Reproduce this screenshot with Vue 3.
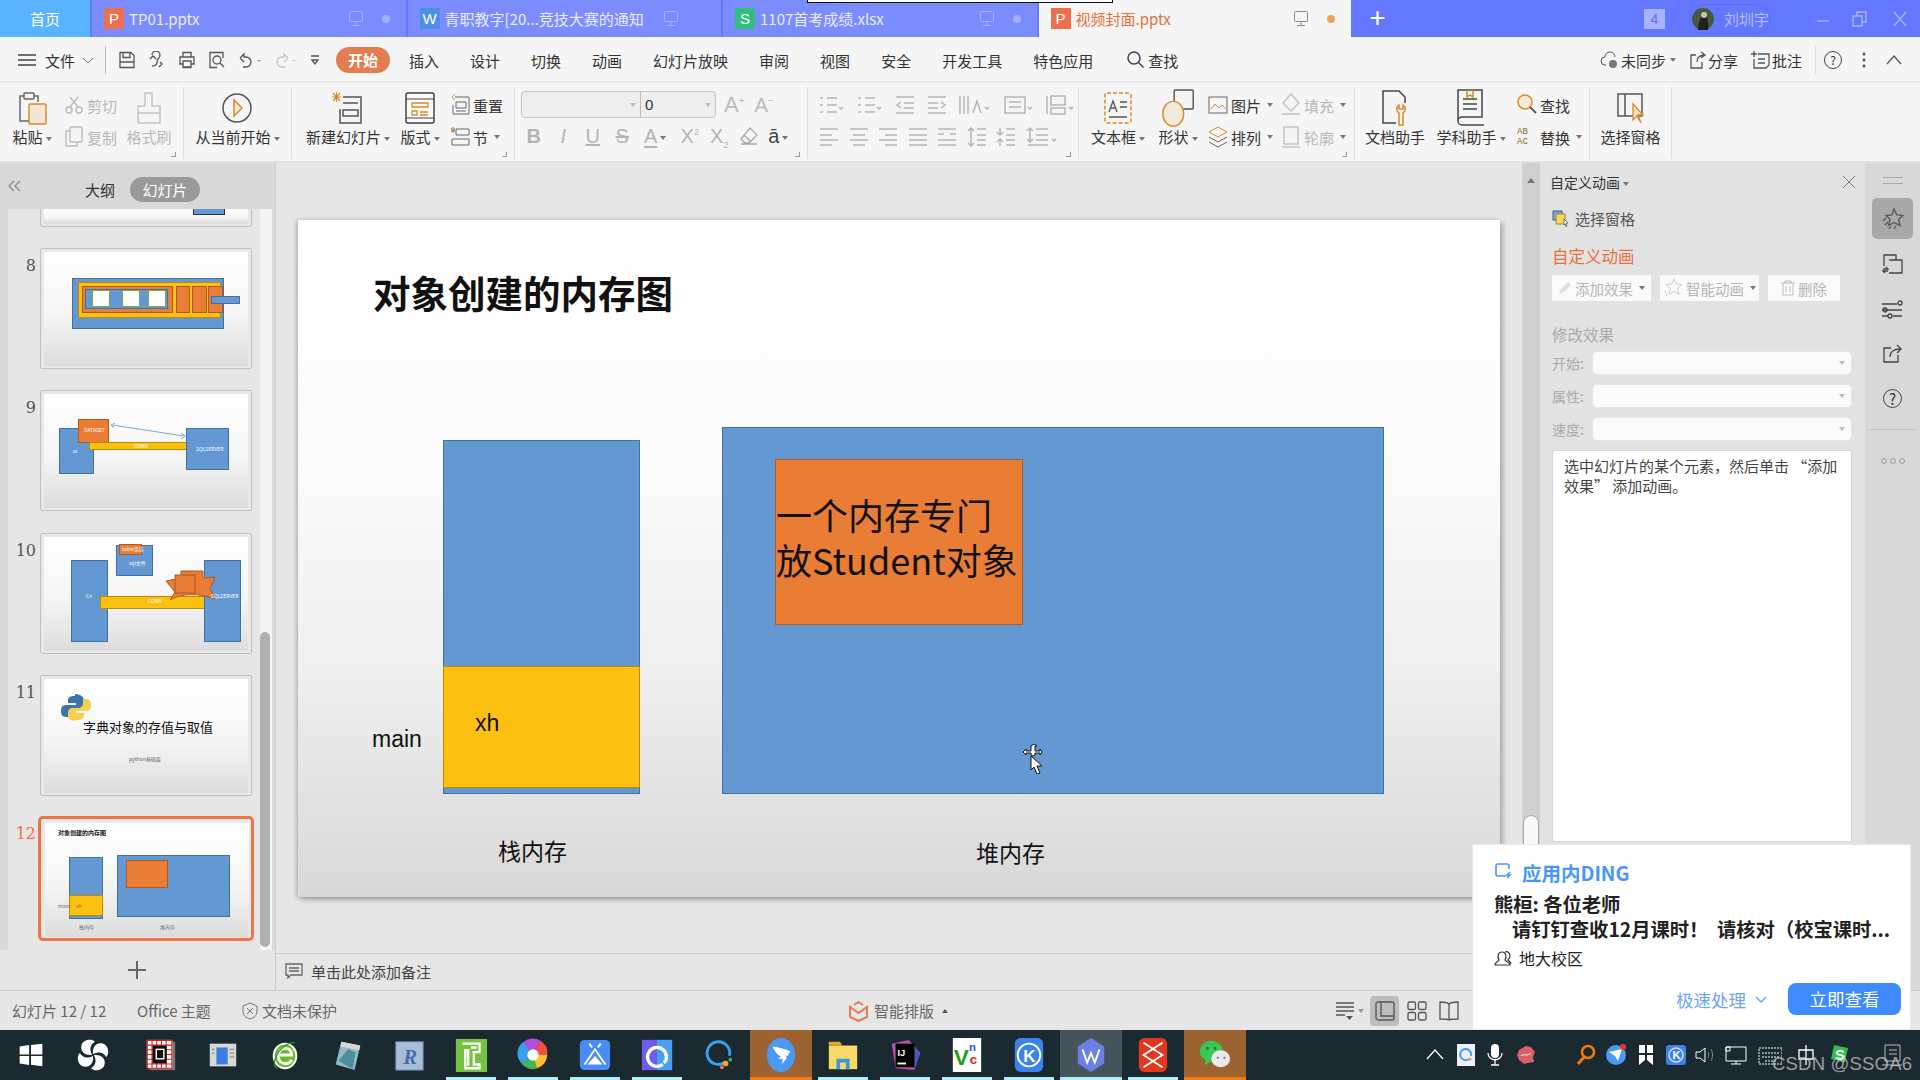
<template>
  <div class="app">
    <div class="tooltip-edge"></div>

    <!-- title tabs -->
    <div class="tabbar">
      <div class="home-tab">首页</div>
      <div v-for="t in tabs" :key="t.name" class="tab" :class="{ active: t.active }">
        <span class="tab-badge" :style="{ background: t.color }">{{ t.mark }}</span>
        <span class="tab-name">{{ t.name }}</span>
        <svg class="tab-monitor" width="16" height="17" viewBox="0 0 16 17" fill="none" stroke="currentColor">
          <rect x="1.5" y="1.5" width="13" height="10" rx="1" />
          <path d="M8 12v3M4 15.5h8" />
        </svg>
        <span v-if="t.dot" class="tab-dot"></span>
      </div>
      <div class="tab-plus">+</div>
      <div class="win-tools">
        <span class="count-badge">4</span>
        <span class="user-chip">
          <svg width="22" height="22" viewBox="0 0 22 22"><circle cx="11" cy="11" r="11" fill="#49573f" /><path d="M6 22c0-7 3-14 6-17 3 3 5 9 4 17z" fill="#1d2419" /><circle cx="12" cy="7" r="3" fill="#c4c6a8" /></svg>
          刘圳宇
        </span>
        <svg class="win-btns" width="100" height="20" viewBox="0 0 100 20" fill="none" stroke="#a8b4ff" stroke-width="1.4">
          <path d="M5 12h12" />
          <path d="M41 7h9v10h-9zM45 7V3h9v10h-4" />
          <path d="M82 3l12 14M94 3L82 17" />
        </svg>
      </div>
    </div>

    <!-- menu row -->
    <div class="menubar">
      <svg class="burger" width="18" height="12" viewBox="0 0 18 12" stroke="#444" stroke-width="1.3"><path d="M0 1h18M0 6h18M0 11h18" /></svg>
      <span class="file-menu">文件</span>
      <svg class="file-chevron" width="12" height="7" viewBox="0 0 12 7" fill="none" stroke="#777"><path d="M1 1l5 5 5-5" /></svg>
      <span class="menu-sep"></span>
      <div class="quick-tools">
        <svg width="18" height="18" viewBox="0 0 18 18"><path d="M2 1.5h11l3 3v12H2zM5 1.5v5h7v-5M2 11h14" /></svg>
        <svg width="18" height="18" viewBox="0 0 18 18"><path d="M4 4a4 4 0 0 1 8 0c0 4-3 3-3 7s-3 4-5 4M2 8l3-3 3 3M12 11l2 2-3 3" /></svg>
        <svg width="18" height="18" viewBox="0 0 18 18"><path d="M5 6V1.500h8V6M2 6h14v7h-3v3.500H5V13H2zM5 10h8v6H5z" /></svg>
        <svg width="18" height="18" viewBox="0 0 18 18"><path d="M15 7V1.500H2v15h7" /><circle cx="9" cy="9" r="4" /><path d="M12 12l4 4" /></svg>
        <svg width="24" height="18" viewBox="0 0 24 18"><path d="M2 7l4-4v3h2a5 5 0 0 1 0 10H5M6 11L2 7" /><path d="M19 9l2 2 2-2" fill="#999" stroke="none" /></svg>
        <svg class="dim" width="24" height="18" viewBox="0 0 24 18"><path d="M14 7l-4-4v3H8a5 5 0 0 0 0 10h3M10 11l4-4" /><path d="M18 9l2 2 2-2" fill="#ccc" stroke="none" /></svg>
        <svg width="10" height="12" viewBox="0 0 10 12"><path d="M1 2h8M2 6l3 4 3-4z" /></svg>
      </div>
      <span class="pill">开始</span>
      <nav class="menu-items">
        <span v-for="m in menus" :key="m">{{ m }}</span>
      </nav>
      <span class="menu-find">
        <svg width="20" height="20" viewBox="0 0 20 20" fill="none" stroke="#444" stroke-width="1.5"><circle cx="8" cy="8" r="6" /><path d="M12.500 12.500l5 5" /></svg>
        查找
      </span>
      <div class="menu-right">
        <span class="mr-item">
          <svg width="20" height="18" viewBox="0 0 20 18" fill="none" stroke="#555"><path d="M6 14H5a4 4 0 0 1 0-8 5 5 0 0 1 10 0" /><circle cx="13" cy="13" r="4" fill="#777" stroke="none" /></svg>
          未同步<i class="caret"></i>
        </span>
        <span class="mr-item">
          <svg width="18" height="18" viewBox="0 0 18 18" fill="none" stroke="#555" stroke-width="1.300"><path d="M7 4H2v13h11v-6M8 11c0-5 3-7 8-7M12 1l4 3-4 3" /></svg>
          分享
        </span>
        <span class="mr-item">
          <svg width="20" height="18" viewBox="0 0 20 18" fill="none" stroke="#555" stroke-width="1.300"><path d="M7 3h11v11l-3 3H3V8M7 8h7M7 12h7M0 3h6M3 0v6" /></svg>
          批注
        </span>
        <span class="mr-sep"></span>
        <span class="help-circle">?</span>
        <svg width="4" height="16" viewBox="0 0 4 16" fill="#555"><circle cx="2" cy="2" r="1.500" /><circle cx="2" cy="8" r="1.500" /><circle cx="2" cy="14" r="1.500" /></svg>
        <svg width="16" height="10" viewBox="0 0 16 10" fill="none" stroke="#555" stroke-width="1.300"><path d="M1 9l7-8 7 8" /></svg>
      </div>
    </div>

    <!-- ribbon -->
    <div class="ribbon">
      <div class="rgroup" style="width: 184px">
        <div class="big" style="width: 36px; margin-left: 14px">
          <svg width="32" height="36" viewBox="0 0 32 36" fill="none" stroke="#666" stroke-width="1.500"><path d="M8 6H4v25h10M22 12V6h-4" /><rect x="8" y="3" width="10" height="6" rx="1" /><rect x="13" y="14" width="17" height="20" rx="1" fill="#f1e6d8" stroke="#d98a2b" /></svg>
          <span class="lbl">粘贴<i class="caret"></i></span>
        </div>
        <div class="stack off" style="width: 62px; margin-left: 14px">
          <span class="row">
            <svg width="20" height="20" viewBox="0 0 20 20" fill="none" stroke="#bbb" stroke-width="1.400"><circle cx="5" cy="15" r="3" /><circle cx="15" cy="15" r="3" /><path d="M6 12L14 2M14 12L6 2" /></svg>
            剪切
          </span>
          <span class="row">
            <svg width="20" height="22" viewBox="0 0 20 22" fill="none" stroke="#bbb" stroke-width="1.400"><rect x="6" y="1" width="12" height="15" rx="1" /><path d="M6 5H2v15h11v-4" /></svg>
            复制
          </span>
        </div>
        <div class="big off" style="width: 46px">
          <svg width="32" height="36" viewBox="0 0 32 36" fill="none" stroke="#c2c2c2" stroke-width="1.500"><path d="M12 16V3h7v13h8v7H5v-7zM5 23h22v10H5z" /></svg>
          <span class="lbl">格式刷</span>
        </div>
        <i class="corner"></i>
      </div>

      <div class="rgroup" style="width: 108px; justify-content: center">
        <div class="big">
          <svg width="32" height="36" viewBox="0 0 32 36" fill="none"><circle cx="16" cy="18" r="14" stroke="#555" stroke-width="1.500" /><path d="M13 10l8 8-8 8z" stroke="#d98a2b" stroke-width="1.500" fill="#f7ebd8" /></svg>
          <span class="lbl">从当前开始<i class="caret"></i></span>
        </div>
      </div>

      <div class="rgroup" style="width: 223px; padding-left: 12px">
        <div class="big" style="width: 88px">
          <svg width="34" height="36" viewBox="0 0 34 36" fill="none" stroke="#555" stroke-width="1.500"><path d="M12 7h18v26H9V19" /><rect x="12" y="20" width="15" height="6" /><path d="M12 13h15" /><path d="M1 7h9M5.500 2v10M2 3l7 8M9 3l-7 8" stroke="#d98a2b" stroke-width="1.200" /></svg>
          <span class="lbl">新建幻灯片<i class="caret"></i></span>
        </div>
        <div class="big" style="width: 44px; margin-left: 6px">
          <svg width="30" height="36" viewBox="0 0 30 36"><rect x="1" y="3" width="28" height="30" rx="2" fill="#fafafa" stroke="#444" stroke-width="1.500" /><path d="M1 9h28M1 28h28" stroke="#444" /><path d="M7 13h16v4H7zM7 21h5v4H7zM15 22h8M15 25h8" fill="none" stroke="#d98a2b" stroke-width="1.300" /></svg>
          <span class="lbl">版式<i class="caret"></i></span>
        </div>
        <div class="stack" style="margin-left: 8px">
          <span class="row">
            <svg width="20" height="24" viewBox="0 0 20 24" fill="none" stroke="#666"><path d="M5 4h14v17H3v-9M6 9h10v6H6zM6 18h10" /><path d="M5 1L2 4l3 3" stroke="#d98a2b" /></svg>
            重置
          </span>
          <span class="row">
            <svg width="20" height="24" viewBox="0 0 20 24" fill="none" stroke="#666"><path d="M6 4h13v6H6zM2 14h17v6H2zM1 5h4M3 2v6" /><path d="M1 3l4 4M5 3L1 7" stroke="#d98a2b" /></svg>
            节<i class="caret"></i>
          </span>
        </div>
        <i class="corner"></i>
      </div>

      <div class="rgroup font-group" style="width: 293px">
        <div class="font-top">
          <div class="font-box">
            <span class="fb-name"><i class="caret"></i></span>
            <span class="fb-size">0<i class="caret"></i></span>
          </div>
          <span class="grow-a">A<sup>+</sup></span>
          <span class="grow-a small-a">A<sup>−</sup></span>
        </div>
        <div class="font-bottom">
          <b>B</b><em>I</em><u>U</u><s>S</s>
          <span class="under-a"><span>A</span><i class="caret"></i></span>
          <span class="xsup">X<sup>2</sup></span>
          <span class="xsup">X<sub>2</sub></span>
          <span class="eraser"><svg width="20" height="20" viewBox="0 0 20 20" fill="none" stroke="#aaa" stroke-width="1.400"><path d="M11 2l7 7-8 8H6l-4-4zM5 9l7 7M2 18h16" /></svg></span>
          <span class="dark-a">ā<i class="caret"></i></span>
        </div>
        <i class="corner"></i>
      </div>

      <div class="rgroup para-group" style="width: 271px">
        <div class="para-row top">
          <svg v-for="(d, i) in paraTop" :key="i" :width="d.w" height="24" :viewBox="`0 0 ${d.w} 24`" fill="none" stroke="#b5b5b5" stroke-width="1.500"><path :d="d.d" /></svg>
        </div>
        <div class="para-row">
          <svg v-for="(d, i) in paraBottom" :key="i" :width="d.w" height="24" :viewBox="`0 0 ${d.w} 24`" fill="none" stroke="#b5b5b5" stroke-width="1.500"><path :d="d.d" /></svg>
        </div>
        <i class="corner"></i>
      </div>

      <div class="rgroup" style="width: 276px; padding-left: 11px">
        <div class="big" style="width: 56px">
          <svg width="32" height="36" viewBox="0 0 32 36" fill="none"><rect x="3" y="3" width="26" height="30" rx="2" stroke="#d98a2b" stroke-width="1.500" stroke-dasharray="4 2" /><path d="M7 22l4-11 4 11M8.500 18h5M18 12h7M18 17h7M7 27h18" stroke="#555" stroke-width="1.300" /></svg>
          <span class="lbl">文本框<i class="caret"></i></span>
        </div>
        <div class="big" style="width: 42px; margin-left: 11px">
          <svg width="34" height="40" viewBox="0 0 34 40" fill="none"><rect x="13" y="1" width="20" height="20" rx="1" stroke="#555" stroke-width="1.500" /><ellipse cx="12" cy="26" rx="11" ry="13" fill="#f3e9db" stroke="#d98a2b" stroke-width="1.500" /></svg>
          <span class="lbl">形状<i class="caret"></i></span>
        </div>
        <div class="stack" style="width: 66px; margin-left: 9px">
          <span class="row">
            <svg width="20" height="20" viewBox="0 0 20 20" fill="none"><rect x="1" y="2" width="18" height="16" stroke="#666" /><path d="M3 14l4-5 4 4 3-3 4 4" stroke="#d98a2b" /></svg>
            图片<i class="caret"></i>
          </span>
          <span class="row">
            <svg width="20" height="22" viewBox="0 0 20 22" fill="none" stroke="#666"><path d="M10 1l9 5-9 5-9-5z" stroke="#d98a2b" /><path d="M1 11l9 5 9-5M1 16l9 5 9-5" /></svg>
            排列<i class="caret"></i>
          </span>
        </div>
        <div class="stack off" style="width: 66px; margin-left: 7px">
          <span class="row">
            <svg width="20" height="24" viewBox="0 0 20 24" fill="none" stroke="#c0c0c0" stroke-width="1.400"><path d="M10 1l8 9-8 8-8-8zM1 21h18" /></svg>
            填充<i class="caret"></i>
          </span>
          <span class="row">
            <svg width="20" height="24" viewBox="0 0 20 24" fill="none" stroke="#c0c0c0" stroke-width="1.400"><rect x="3" y="2" width="14" height="17" /><path d="M1 22h18" /></svg>
            轮廓<i class="caret"></i>
          </span>
        </div>
        <i class="corner"></i>
      </div>

      <div class="rgroup" style="width: 235px; padding-left: 10px">
        <div class="big" style="width: 60px">
          <svg width="28" height="38" viewBox="0 0 28 38" fill="none"><path d="M15 34H2V2h16l6 6v6" stroke="#444" stroke-width="1.500" /><path d="M18 16c-3 2-3 6 0 8v12h4V24c3-2 3-6 0-8v4h-4z" stroke="#d98a2b" stroke-width="1.500" /></svg>
          <span class="lbl">文档助手</span>
        </div>
        <div class="big" style="width: 70px; margin-left: 11px">
          <svg width="30" height="38" viewBox="0 0 30 38" fill="none" stroke="#444" stroke-width="1.500"><path d="M2 32V1h24v27H6a4 4 0 0 0 0 8h22M7 10h14M7 15h14M7 20h14" /><path d="M11 1v7l3-2 3 2V1" stroke="#d98a2b" /></svg>
          <span class="lbl">学科助手<i class="caret"></i></span>
        </div>
        <div class="stack" style="margin-left: 11px">
          <span class="row">
            <svg width="20" height="22" viewBox="0 0 20 22" fill="none"><circle cx="8" cy="8" r="7" stroke="#d98a2b" stroke-width="1.500" fill="#f7ebd8" /><path d="M13 13l6 6" stroke="#555" stroke-width="1.800" /></svg>
            查找
          </span>
          <span class="row">
            <span class="abac">AB<br />AC</span>
            替换<i class="caret"></i>
          </span>
        </div>
      </div>

      <div class="rgroup" style="width: 82px; justify-content: center">
        <div class="big">
          <svg width="30" height="36" viewBox="0 0 30 36" fill="none"><path d="M3 4h24v22H3zM10 4v22" stroke="#555" stroke-width="1.500" /><path d="M18 14l10 11h-5l3 8-4-7-4 4z" fill="#f5e4c6" stroke="#d98a2b" stroke-width="1.300" /></svg>
          <span class="lbl">选择窗格</span>
        </div>
      </div>
    </div>

    <!-- workspace -->
    <div class="work">
      <aside class="slides-panel">
        <div class="sp-head">
          <svg class="sp-back" width="13" height="12" viewBox="0 0 13 12" fill="none" stroke="#888" stroke-width="1.300"><path d="M6 1L1 6l5 5M12 1L7 6l5 5" /></svg>
          <span class="sp-tab">大纲</span>
          <span class="sp-tab on">幻灯片</span>
        </div>
        <div class="sp-body">
          <div class="sp-list">
            <div class="thumb-clip">
              <div class="thumb-inner clip-inner">
                <span class="th-shape" style="left: 149px; top: -20px; width: 32px; height: 26px; background: #6498d2"></span>
              </div>
            </div>
            <div v-for="s in thumbs" :key="s.n" class="thumb-row" :class="{ current: s.n === 12 }">
              <span class="th-num">{{ s.n }}</span>
              <div class="thumb">
                <div class="thumb-inner">
                  <span
                    v-for="(b, i) in s.boxes"
                    :key="i"
                    class="th-shape"
                    :style="{ left: b[0] + 'px', top: b[1] + 'px', width: b[2] + 'px', height: b[3] + 'px', background: colors[b[4]].fill, borderColor: colors[b[4]].edge }"
                  ></span>
                  <svg v-if="s.n === 9" class="th-arrow" width="205" height="115" viewBox="0 0 205 115" fill="none" stroke="#7da9dc"><path d="M68 31l72 11M71 29l-4 2 3 3M137 39l4 3-4 3" /></svg>
                  <svg v-if="s.n === 10" class="th-arrow" width="205" height="115" viewBox="0 0 205 115"><path d="M122 44l15-3 0-7 22 0 0 7 12-1-5 12 5 10c-15-6-34-6-45 1l5-8z" fill="#e97d35" stroke="#ae5a21" /><rect x="131" y="38" width="20" height="18" fill="#e97d35" stroke="#ae5a21" /></svg>
                  <svg v-if="s.n === 11" class="th-arrow" width="205" height="115" viewBox="0 0 205 115"><path d="M31 17c-6 0-7 2-7 5v2h8v2H22c-4 0-5 3-5 6s1 6 5 6h3v-4c0-3 2-5 5-5h6c2 0 4-2 4-4v-4c0-3-4-6-9-6z" fill="#3d74a8" /><path d="M32 41c6 0 8-2 8-5v-2h-8v-2h10c4 0 5-3 5-6s-1-6-5-6h-3v4c0 3-2 5-5 5h-6c-2 0-4 2-4 4v4c0 3 3 6 8 4z" fill="#f4d04b" /></svg>
                  <span v-for="(t, i) in s.labels" :key="'l' + i" class="th-label" :class="t.cls" :style="{ left: t.x + 'px', top: t.y + 'px' }">{{ t.text }}</span>
                </div>
              </div>
            </div>
          </div>
          <div class="sp-scroll"><div class="sp-thumb"></div></div>
        </div>
        <div class="sp-add">
          <svg width="20" height="20" viewBox="0 0 20 20" stroke="#666" stroke-width="2"><path d="M10 1v18M1 10h18" /></svg>
        </div>
      </aside>

      <section class="center">
        <div class="canvas">
          <div class="slide">
            <h1 class="slide-title">对象创建的内存图</h1>
            <div class="shape blue" style="left: 145px; top: 220px; width: 197px; height: 354px"></div>
            <div class="shape yellow" style="left: 145px; top: 446px; width: 197px; height: 122px">xh</div>
            <div class="shape blue" style="left: 424px; top: 207px; width: 662px; height: 367px"></div>
            <div class="shape orange" style="left: 477px; top: 239px; width: 248px; height: 166px">一个内存专门放Student对象</div>
            <span class="slide-text" style="left: 74px; top: 504px">main</span>
            <span class="slide-text" style="left: 200px; top: 615px">栈内存</span>
            <span class="slide-text" style="left: 678px; top: 617px">堆内存</span>
            <svg class="cursor" width="24" height="30" viewBox="0 0 24 30">
              <path d="M9 2l3-2 3 2h-2v5h5V5l2 3-2 3V9h-5v2l-2 1-2-1V9H4v2L1 8l3-3v2h5zM9 12l11 10h-5l3 7-3 1-3-7-3 3z" fill="#fff" stroke="#111" stroke-width="1" />
            </svg>
          </div>
        </div>
        <div class="notes">
          <svg width="20" height="18" viewBox="0 0 20 18" fill="none" stroke="#666" stroke-width="1.300"><path d="M2 2h16v11H7l-3 3v-3H2zM5 6h10M5 9h10" /></svg>
          单击此处添加备注
        </div>
      </section>

      <div class="v-scroll">
        <i class="up-arrow"></i>
        <div class="v-thumb"></div>
      </div>

      <aside class="pane">
        <div class="pane-head">
          <span>自定义动画<i class="caret"></i></span>
          <svg width="12" height="12" viewBox="0 0 12 12" stroke="#777"><path d="M0 0l12 12M12 0L0 12" /></svg>
        </div>
        <div class="pane-link">
          <svg width="17" height="17" viewBox="0 0 17 17"><rect x="1" y="1" width="9" height="9" fill="#7fa4d8" stroke="#3e5f91" /><rect x="4" y="4" width="9" height="10" fill="#f3d65e" stroke="#a78a1e" /><path d="M12 9l4 4-2 .5 1 2.500-1 .5-1-2.500-1 1z" fill="#fff" stroke="#345" stroke-width=".7" /></svg>
          选择窗格
        </div>
        <h3 class="pane-orange">自定义动画</h3>
        <div class="pane-btns">
          <span class="pbtn" style="width: 99px">
            <svg width="14" height="14" viewBox="0 0 14 14"><path d="M1 13l2-5 7-7 3 3-7 7z" fill="#ddd" /></svg>
            添加效果<i class="caret"></i>
          </span>
          <span class="pbtn" style="width: 99px">
            <svg width="20" height="20" viewBox="0 0 20 20" fill="none" stroke="#ccc"><path d="M11 1l2 5 6 .5-4.500 4 1.500 6-5-3-5 3 1.500-6L3 6.500 9 6zM2 13l2 5" /></svg>
            智能动画<i class="caret"></i>
          </span>
          <span class="pbtn" style="width: 72px">
            <svg width="14" height="16" viewBox="0 0 14 16" fill="none" stroke="#bbb"><path d="M0 3h14M4 3V1h6v2M2 3v12h10V3M5 6v6M9 6v6" /></svg>
            删除
          </span>
        </div>
        <div class="pane-sub">修改效果</div>
        <div v-for="f in fields" :key="f" class="pane-field">
          <label>{{ f }}:</label>
          <div class="pane-select"><i class="caret light"></i></div>
        </div>
        <div class="pane-text">选中幻灯片的某个元素，然后单击 “添加效果” 添加动画。</div>
      </aside>

      <aside class="side">
        <div class="side-grip"></div>
        <div class="side-btn on">
          <svg width="22" height="22" viewBox="0 0 22 22" fill="none" stroke="#555" stroke-width="1.300"><path d="M12 1l3 6 6 .5-4.500 4 1.500 6-6-3-5.500 3 1.500-6L4 7.500 10 7zM1 13l3-3M3 17l3-3M7 21l2-3M12 21l2-3" /></svg>
        </div>
        <div class="side-btn">
          <svg width="21" height="20" viewBox="0 0 21 20" fill="none" stroke="#444" stroke-width="1.300"><path d="M2 12V1h12v5M7 6h13v13H7M1 15h5l-2-2M6 17H1l2 2" /></svg>
        </div>
        <div class="side-btn">
          <svg width="21" height="20" viewBox="0 0 21 20" fill="none" stroke="#444" stroke-width="1.300"><path d="M0 5h15M0 11h20M0 17h6M11 17h9" /><circle cx="18" cy="4" r="2" /><circle cx="8" cy="17" r="2" /><circle cx="3" cy="11" r="2" /></svg>
        </div>
        <div class="side-btn">
          <svg width="20" height="20" viewBox="0 0 20 20" fill="none" stroke="#444" stroke-width="1.300"><path d="M8 4H1v14h14v-7M7 13c0-5 4-8 10-8M14 1l4 4-4 4" /></svg>
        </div>
        <div class="side-btn">
          <span class="side-help">?</span>
        </div>
        <div class="side-line"></div>
        <div class="side-more">
          <i></i><i></i><i></i>
        </div>
      </aside>
    </div>

    <!-- status bar -->
    <div class="status">
      <span class="st-cell" style="width: 125px">幻灯片 12 / 12</span>
      <span class="st-cell" style="width: 105px">Office 主题</span>
      <span class="st-cell" style="width: 130px">
        <svg width="16" height="18" viewBox="0 0 16 18" fill="none" stroke="#777"><path d="M8 1l7 3v6c0 3-3 6-7 7-4-1-7-4-7-7V4zM5 6l6 6M11 6l-6 6" /></svg>
        文档未保护
      </span>
      <span class="st-smart">
        <svg width="21" height="22" viewBox="0 0 21 22" fill="none" stroke="#e37d4f" stroke-width="2"><path d="M6 5l4.500-3L15 5M2 7v10l8.500 4L19 17V7l-8.500 6z" /></svg>
        智能排版
        <i class="caret up"></i>
      </span>
      <div class="st-views">
        <svg width="30" height="20" viewBox="0 0 30 20" stroke="#555" stroke-width="1.300"><path d="M1 2h18M1 6h18M1 10h18M1 14h9" /><path d="M11 15h7l-3.500 4z" fill="#555" stroke="none" /><path d="M23 8h6l-3 4z" fill="#999" stroke="none" /></svg>
        <span class="view on"><svg width="20" height="20" viewBox="0 0 20 20" fill="none" stroke="#555" stroke-width="1.300"><rect x="1" y="1" width="18" height="18" rx="2" /><path d="M6 1v14h13" /></svg></span>
        <svg width="20" height="20" viewBox="0 0 20 20" fill="none" stroke="#555" stroke-width="1.300"><rect x="1" y="1" width="7.500" height="7.500" rx="1.500" /><rect x="11.500" y="1" width="7.500" height="7.500" rx="1.500" /><rect x="1" y="11.500" width="7.500" height="7.500" rx="1.500" /><rect x="11.500" y="11.500" width="7.500" height="7.500" rx="1.500" /></svg>
        <svg width="20" height="20" viewBox="0 0 20 20" fill="none" stroke="#555" stroke-width="1.300"><path d="M10 3C8 1 4 1 1 1v17c3 0 7 0 9 1 2-1 6-1 9-1V1c-3 0-7 0-9 2zM10 3v16" /></svg>
      </div>
    </div>

    <!-- taskbar -->
    <div class="taskbar">
      <div class="tb-left">
        <div v-for="t in taskItems" :key="t.id" class="tb-item" :class="t.state">
          <svg width="36" height="36" viewBox="0 0 36 36" v-html="t.svg"></svg>
        </div>
      </div>
      <div class="tray-icons">
        <svg v-for="t in trayItems" :key="t.x" :style="{ left: t.x + 'px' }" width="24" height="24" viewBox="0 0 24 24" v-html="t.svg"></svg>
      </div>
      <span class="watermark">CSDN @SSOA6</span>
    </div>

    <!-- DING popup -->
    <div class="ding">
      <div class="ding-title">
        <svg width="18" height="18" viewBox="0 0 18 18" fill="none" stroke="#4a94ff" stroke-width="1.600"><path d="M11 13H3a2 2 0 0 1-2-2V3a2 2 0 0 1 2-2h9a2 2 0 0 1 2 2v3" /><path d="M15 9l-3 3h3l-3 3" /></svg>
        应用内DING
      </div>
      <div class="ding-line">熊桓: 各位老师</div>
      <div class="ding-line second">请钉钉查收12月课时！ &nbsp;请核对（校宝课时...</div>
      <div class="ding-group">
        <svg width="18" height="16" viewBox="0 0 18 16" fill="none" stroke="#333" stroke-width="1.200"><path d="M1 15c0-3 3-3 4-5-2-3-1-8 3-8s5 5 3 8c1 2 5 2 5 5zM11 2c3-1 5 1 5 4 0 2-1 3-2 4 1 1 3 2 3 4" /></svg>
        地大校区
      </div>
      <div class="ding-actions">
        <span class="ding-fast">极速处理
          <svg width="12" height="7" viewBox="0 0 12 7" fill="none" stroke="#6ea4f5" stroke-width="1.500"><path d="M1 1l5 5 5-5" /></svg>
        </span>
        <span class="ding-view">立即查看</span>
      </div>
    </div>
  </div>
</template>

<script setup>
const tabs = [
  { name: 'TP01.pptx', mark: 'P', color: '#ee6f4d', dot: true },
  { name: '青职教字[20...竞技大赛的通知', mark: 'W', color: '#4d8fe8' },
  { name: '1107首考成绩.xlsx', mark: 'S', color: '#2fbf7f', dot: true },
  { name: '视频封面.pptx', mark: 'P', color: '#ee6f4d', dot: true, active: true }
]

const menus = ['插入', '设计', '切换', '动画', '幻灯片放映', '审阅', '视图', '安全', '开发工具', '特色应用']
const fields = ['开始', '属性', '速度']

const colors = {
  b: { fill: '#6498d2', edge: '#41719c' },
  o: { fill: '#e97d35', edge: '#ae5a21' },
  y: { fill: '#fcc010', edge: '#bc8c00' },
  w: { fill: '#fff', edge: '#70ad47' }
}

const thumbs = [
  {
    n: 8,
    boxes: [
      [28, 26, 152, 51, 'b'], [34, 30, 143, 36, 'y'], [38, 34, 91, 27, 'o'], [41, 37, 83, 20, 'b'],
      [48, 38, 18, 17, 'w'], [78, 38, 18, 17, 'w'], [104, 38, 18, 17, 'w'],
      [132, 34, 14, 27, 'o'], [148, 34, 15, 27, 'o'], [164, 34, 15, 27, 'o'], [167, 44, 29, 8, 'b']
    ],
    labels: []
  },
  {
    n: 9,
    boxes: [[15, 34, 35, 46, 'b'], [34, 25, 31, 24, 'o'], [45, 48, 101, 8, 'y'], [142, 34, 43, 42, 'b']],
    labels: [
      { text: 'DATASET', x: 40, y: 33, cls: 'tiny white' },
      { text: 'CONN', x: 90, y: 49, cls: 'tiny white' },
      { text: 'SQLSERVER', x: 152, y: 52, cls: 'tiny white' },
      { text: 'ui', x: 29, y: 54, cls: 'tiny white' }
    ]
  },
  {
    n: 10,
    boxes: [[27, 23, 37, 82, 'b'], [72, 8, 37, 31, 'b'], [75, 7, 23, 11, 'o'], [56, 59, 107, 13, 'y'], [160, 23, 37, 82, 'b']],
    labels: [
      { text: 'table带店', x: 78, y: 9, cls: 'tiny white' },
      { text: 'sql文件', x: 85, y: 23, cls: 'tiny white' },
      { text: 'C#', x: 42, y: 56, cls: 'tiny white' },
      { text: 'CONN', x: 104, y: 61, cls: 'tiny white' },
      { text: 'SQLSERVER', x: 167, y: 56, cls: 'tiny white' }
    ]
  },
  {
    n: 11,
    boxes: [],
    labels: [
      { text: '字典对象的存值与取值', x: 39, y: 41, cls: 'th-title' },
      { text: 'python基础篇', x: 85, y: 77, cls: 'tiny gray' }
    ]
  },
  {
    n: 12,
    boxes: [[24, 34, 34, 62, 'b'], [24, 72, 34, 21, 'y'], [72, 32, 113, 62, 'b'], [81, 37, 42, 28, 'o']],
    labels: [
      { text: '对象创建的内存图', x: 13, y: 7, cls: 'th-bold' },
      { text: 'xh', x: 31, y: 80, cls: 'tiny gray' },
      { text: 'main', x: 13, y: 80, cls: 'tiny gray' },
      { text: '栈内存', x: 34, y: 101, cls: 'tiny gray' },
      { text: '堆内存', x: 115, y: 101, cls: 'tiny gray' }
    ]
  }
]

const paraTop = [
  { w: 26, d: 'M1 5h3M1 12h3M1 19h3M8 5h10M8 12h10M8 19h10M20 14l2 2 2-2' },
  { w: 26, d: 'M1 5h3M1 12h3M1 19h3M8 5h10M8 12h10M8 19h10M20 14l2 2 2-2' },
  { w: 20, d: 'M1 4h18M9 10h10M9 15h10M1 20h18M6 9l-4 3 4 3' },
  { w: 20, d: 'M1 4h18M1 10h10M1 15h10M1 20h18M14 9l4 3-4 3' },
  { w: 32, d: 'M1 3v18M5 3v18M9 3v18M14 20l4-12 4 12M26 14l2 2 2-2' },
  { w: 30, d: 'M2 4h20v16H2zM6 9h12M6 14h12M25 14l2 2 2-2' },
  { w: 30, d: 'M2 3v18M6 3h14v9H6zM6 15h14v6H6zM24 14l2 2 2-2' }
]

const paraBottom = [
  { w: 20, d: 'M1 4h18M1 10h12M1 15h18M1 20h12' },
  { w: 20, d: 'M1 4h18M4 10h12M1 15h18M4 20h12' },
  { w: 20, d: 'M1 4h18M7 10h12M1 15h18M7 20h12' },
  { w: 20, d: 'M1 4h18M1 10h18M1 15h18M1 20h18' },
  { w: 20, d: 'M1 4h18M1 9h6M13 9h6M1 15h18M1 20h18' },
  { w: 20, d: 'M10 4h9M10 10h9M10 15h9M10 20h9M4 3v18M1 6l3-3 3 3M1 18l3 3 3-3' },
  { w: 20, d: 'M10 4h9M10 10h9M10 15h9M10 20h9M4 3v7M4 14v7M1 7l3 3 3-3M1 17l3-3 3 3' },
  { w: 34, d: 'M10 4h12M10 10h12M10 15h12M2 20h20M4 3v14M1 6l3-3 3 3M1 14l3 3 3-3M26 14l2 2 2-2' }
]

const blade = 'M17 18C9 19 4 14 6 7c2-5 10-7 14-3-5 3-6 8-3 14z'

const taskItems = [
  { id: 'win', svg: '<path d="M6 9l10-1.500v10H6zM18 7.300L30 6v11.500H18zM6 19h10v9.500L6 27zM18 19h12v11l-12-1.700z" fill="#fff"/>' },
  { id: 'fan', svg: `<g fill="#fff"><path d="${blade}"/><path d="${blade}" transform="rotate(90 18 18)"/><path d="${blade}" transform="rotate(180 18 18)"/><path d="${blade}" transform="rotate(270 18 18)"/></g>` },
  { id: 'grid', svg: '<rect x="6" y="4" width="27" height="30" fill="#777"/><rect x="3" y="2" width="27" height="30" fill="#fff"/><path d="M3 2.500h27M3 7.500h27M3 12.500h27M3 17.500h27M3 22.500h27M3 27.500h27M3 32h27M3.500 2v30M8.500 2v30M13.500 2v30M18.500 2v30M23.500 2v30M29.500 2v30" stroke="#e02020" stroke-width="1.200"/><rect x="9" y="8" width="15" height="19" fill="#111"/><rect x="13" y="12" width="8" height="10" fill="none" stroke="#fff" stroke-width="1.500"/>' },
  { id: 'view', svg: '<rect x="4" y="6" width="28" height="24" fill="#d8d8d8"/><rect x="11" y="10" width="12" height="18" fill="#3a80e0"/><path d="M25 12h5M25 16h5M25 20h5M6 12h3M6 16h3" stroke="#777"/>' },
  { id: 'ie', svg: '<ellipse cx="18" cy="19" rx="13" ry="14" fill="#fff"/><ellipse cx="18" cy="19" rx="11" ry="12" fill="#69bb2e"/><path d="M11 18h14c0-5-3-7-7-7s-7 3-7 8 3 8 7 8c3 0 6-1 7-4" fill="none" stroke="#fff" stroke-width="3"/><path d="M28 5c-5-1-16 5-20 16-2 6-1 10 2 11" fill="none" stroke="#2f9a26" stroke-width="1.500"/>' },
  { id: 'note', svg: '<path d="M12 4l20 4-6 26L6 28z" fill="#8fbcc4"/><path d="M12 4l20 4-1 5L11 9z" fill="#d6d8d8"/><path d="M9 24l10-12 8 3-3 18z" fill="#4f8c9e"/>' },
  { id: 'r', svg: '<rect x="4" y="4" width="29" height="30" fill="#a9bdd7" stroke="#5f7fa8"/><text x="12" y="28" font-family="Liberation Serif,serif" font-style="italic" font-weight="700" font-size="22" fill="#3f6ea8">R</text>' },
  { id: 'book', state: 'run', svg: '<rect x="2" y="1" width="33" height="35" fill="#76c043"/><path d="M9 6h18v9h-6v13h6v4H12V13h3v16M18 10h6" fill="none" stroke="#fff" stroke-width="2.500"/>' },
  { id: 'chrome', state: 'run', svg: '<circle cx="18" cy="18" r="15" fill="#f14"/><path d="M18 18L8 4a15 15 0 0 1 18-1z" fill="#b14de0"/><path d="M18 18l8-15a15 15 0 0 1 7 15z" fill="#f0503c"/><path d="M18 18h15a15 15 0 0 1-11 14z" fill="#f7c22d"/><path d="M18 18l4 14a15 15 0 0 1-16-5z" fill="#3fb85b"/><path d="M18 18L6 27A15 15 0 0 1 8 4z" fill="#37a0f0"/><circle cx="18" cy="18" r="6" fill="#fff"/>' },
  { id: 'cut', state: 'run', svg: '<rect x="2" y="2" width="32" height="32" rx="5" fill="#4a8cf5"/><path d="M7 28L18 12l11 16M12 6l3 4M24 6l-3 4" stroke="#fff" stroke-width="2" fill="none"/><path d="M18 19l8 9H10z" fill="#fff"/>' },
  { id: 'ring', state: 'run', svg: '<rect x="2" y="2" width="32" height="32" fill="#6d5cf0"/><rect x="18" y="2" width="16" height="32" fill="#4aa0f0"/><path d="M24 28a10 10 0 1 1 4-8c0 3-1 5-3 6" fill="none" stroke="#fff" stroke-width="3.500"/>' },
  { id: 'qq', svg: '<path d="M24 26a12 12 0 1 1 5-7" fill="none" stroke="#3aa0f0" stroke-width="3"/><circle cx="25" cy="27" r="3" fill="#f5a623"/><circle cx="30" cy="23" r="2" fill="#39b54a"/><circle cx="21" cy="31" r="2" fill="#e74"/>' },
  { id: 'ding', state: 'alert', svg: '<ellipse cx="18" cy="18" rx="15" ry="18" fill="#4a9af5"/><path d="M9 9c7 1 14 3 19 5l-3 5-2-.5 1 3-5 6 1-5-5-1 3-2c-3-1-6-4-9-10.500z" fill="#fff"/>' },
  { id: 'folder', state: 'run', svg: '<path d="M3 8V4h12l2 4z" fill="#e2a922"/><rect x="3" y="8" width="30" height="25" fill="#fbd968"/><rect x="11" y="22" width="14" height="11" fill="#3a9bd9"/><rect x="15" y="26" width="6" height="7" fill="#fbd968"/>' },
  { id: 'idea', state: 'run', svg: '<path d="M4 6l18-4 12 14-6 18-20-2z" fill="#c04db0"/><path d="M24 4l10 13-7 17z" fill="#3e5cc9"/><rect x="8" y="6" width="20" height="25" fill="#000"/><text x="10" y="19" font-family="Liberation Sans,sans-serif" font-weight="700" font-size="10" fill="#fff">IJ</text><path d="M10 27h9" stroke="#fff" stroke-width="2"/>' },
  { id: 'vnc', state: 'run', svg: '<rect x="3" y="0" width="30" height="36" fill="#fff"/><text x="4" y="29" font-family="Liberation Sans,sans-serif" font-weight="700" font-size="24" fill="#1aa01a">V</text><text x="20" y="14" font-family="Liberation Sans,sans-serif" font-weight="700" font-size="12" fill="#2a55d0">n</text><text x="21" y="28" font-family="Liberation Sans,sans-serif" font-weight="700" font-size="14" fill="#d92020">c</text>' },
  { id: 'k', state: 'run', svg: '<rect x="3" y="0" width="30" height="36" rx="6" fill="#3c82ee"/><circle cx="18" cy="18" r="12" fill="none" stroke="#fff" stroke-width="2"/><text x="12" y="25" font-family="Liberation Sans,sans-serif" font-weight="700" font-size="18" fill="#fff">K</text>' },
  { id: 'wps', state: 'active', svg: '<path d="M18 0l14 9v18l-14 9-14-9V9z" fill="#6c7fe8"/><path d="M9 12l5 14 4-10 4 10 5-14" fill="none" stroke="#fff" stroke-width="2"/>' },
  { id: 'x', state: 'run', svg: '<rect x="3" y="0" width="30" height="36" rx="6" fill="#e2391e"/><path d="M8 5l20 13L8 31M28 5L8 18l20 13" fill="none" stroke="#fff" stroke-width="2"/>' },
  { id: 'wechat', state: 'alert', svg: '<ellipse cx="14" cy="14" rx="12" ry="11" fill="#38c85a"/><path d="M8 23l-1 6 7-5z" fill="#38c85a"/><ellipse cx="24" cy="22" rx="10" ry="9" fill="#eaeaea"/><circle cx="10" cy="11" r="1.500" fill="#1a7a30"/><circle cx="18" cy="11" r="1.500" fill="#1a7a30"/><circle cx="21" cy="21" r="1.200" fill="#777"/><circle cx="28" cy="21" r="1.200" fill="#777"/>' }
]

const trayItems = [
  { x: 1423, svg: '<path d="M4 16l8-9 8 9" fill="none" stroke="#fff" stroke-width="1.300"/>' },
  { x: 1454, svg: '<rect x="3" y="1" width="18" height="22" fill="#eef"/><path d="M15 16a5.500 5.500 0 1 1 2-3" fill="none" stroke="#3aa0f0" stroke-width="2"/><circle cx="16" cy="16" r="1.500" fill="#f5a623"/>' },
  { x: 1483, svg: '<rect x="8" y="1" width="8" height="14" rx="4" fill="#fff"/><path d="M5 10c0 9 14 9 14 0M12 17v5M8 22h8" fill="none" stroke="#fff" stroke-width="1.300"/>' },
  { x: 1514, svg: '<path d="M12 3l5 1 4 5-2 5 1 5-6 1-4 1-5-4-2-5 2-5z" fill="#d9606a"/><path d="M7 13c3-3 5 1 10-3" fill="none" stroke="#dfe" />' },
  { x: 1574, svg: '<circle cx="14" cy="9" r="6" fill="none" stroke="#f07a10" stroke-width="2.500"/><path d="M10 14l-6 7" stroke="#f07a10" stroke-width="3"/>' },
  { x: 1604, svg: '<circle cx="12" cy="12" r="10" fill="#4a9af5"/><path d="M5 9l13-3-4 12-3-5z" fill="#fff"/><circle cx="19" cy="4" r="3" fill="#e33"/>' },
  { x: 1634, svg: '<path d="M5 2h6v8H5zM13 2h6v8h-6zM5 12h6v5l-6 5zM13 12h6v10l-6-5z" fill="#fff"/>' },
  { x: 1664, svg: '<rect x="2" y="2" width="20" height="20" rx="3" fill="#3c82ee"/><circle cx="12" cy="12" r="7" fill="none" stroke="#cfe0ff" stroke-width="1.500"/><text x="8.500" y="16" font-family="Liberation Sans,sans-serif" font-weight="700" font-size="11" fill="#fff">K</text>' },
  { x: 1693, svg: '<path d="M3 9h4l5-4v14l-5-4H3z" fill="none" stroke="#fff"/><path d="M15 9c1 2 1 4 0 6M18 6c2 4 2 8 0 12" fill="none" stroke="#888"/>' },
  { x: 1724, svg: '<path d="M2 4h20v14H2zM12 18v3M7 21h10M2 4h4v4H2z" fill="none" stroke="#fff"/>' },
  { x: 1758, svg: '<path d="M1 5h23v16H1zM4 10h17M4 14h17M7 18h11" fill="none" stroke="#fff" stroke-dasharray="2 1"/>' },
  { x: 1794, svg: '<path d="M5 7h14v9H5zM12 2v20" fill="none" stroke="#fff" stroke-width="1.300"/>' },
  { x: 1828, svg: '<path d="M6 2l14 3-3 14-14-3z" fill="#2ebd4e"/><text x="7" y="17" font-family="Liberation Sans,sans-serif" font-weight="700" font-size="15" fill="#fff">S</text>' },
  { x: 1880, svg: '<path d="M5 2h15v16H5zM9 7h8M9 11h8M2 22h20" fill="none" stroke="#bbb"/>' }
]
</script>

<style scoped>
.app {
  position: relative;
  width: 1920px;
  height: 1080px;
  overflow: hidden;
  display: flex;
  flex-direction: column;
  font-family: 'Noto Sans CJK SC', 'Noto Sans', sans-serif;
  font-size: 15px;
  color: #333;
  background: #e6e6e6;
}

.tooltip-edge {
  position: absolute;
  left: 807px;
  top: 0;
  width: 306px;
  height: 3px;
  background: #fff;
  border: 1px solid #111;
  border-top: 0;
  box-sizing: border-box;
  z-index: 3;
}

.caret {
  display: inline-block;
  width: 0;
  height: 0;
  margin-left: 3px;
  vertical-align: middle;
  border-left: 3px solid transparent;
  border-right: 3px solid transparent;
  border-top: 4px solid #777;
}

.caret.light {
  border-top-color: #bbb;
}

.caret.up {
  border-top: 0;
  border-bottom: 4px solid #555;
}

/* tabs */
.tabbar {
  height: 37px;
  display: flex;
  background: #6478ff;
  color: #e9ecff;
  flex-shrink: 0;
}

.home-tab {
  width: 90px;
  background: #5ab3ff;
  color: #fff;
  display: flex;
  align-items: center;
  justify-content: center;
  margin-right: 2px;
}

.tab {
  width: 313.500px;
  box-sizing: border-box;
  margin-right: 2px;
  padding-left: 12px;
  display: flex;
  align-items: center;
  background: #7b8cff;
  position: relative;
}

.tab.active {
  width: 312px;
  margin-right: 0;
  background: #f5f5f5;
  color: #e8703a;
}

.tab-badge {
  width: 20px;
  height: 21px;
  color: #fff;
  text-align: center;
  font: 400 15px/21px 'Liberation Sans', sans-serif;
  margin-right: 5px;
}

.tab-monitor {
  position: absolute;
  right: 42px;
  color: #a4b0ff;
}

.tab-dot {
  position: absolute;
  right: 16px;
  width: 8px;
  height: 8px;
  border-radius: 50%;
  background: #a4b0ff;
}

.tab.active .tab-monitor {
  color: #8a8a8a;
}

.tab.active .tab-dot {
  background: #f0a050;
}

.tab-plus {
  width: 54px;
  text-align: center;
  color: #fff;
  font: 400 28px/36px 'Liberation Sans', sans-serif;
}

.win-tools {
  margin-left: auto;
  display: flex;
  align-items: center;
  padding-right: 6px;
}

.count-badge {
  width: 21px;
  height: 20px;
  margin-right: 24px;
  background: #a6b3ff;
  color: #5f70e8;
  text-align: center;
  font: 14px/20px 'Liberation Sans', sans-serif;
}

.user-chip {
  display: flex;
  align-items: center;
  gap: 10px;
  color: #b3bdff;
  width: 82px;
  height: 30px;
  padding: 0 0 0 2px;
  border: 1px solid #5a6df0;
  border-radius: 15px;
  box-sizing: border-box;
  margin-right: 41px;
  white-space: nowrap;
}

.win-btns {
  margin-right: 2px;
}

/* menu row */
.menubar {
  height: 46px;
  display: flex;
  align-items: center;
  background: #f5f5f5;
  flex-shrink: 0;
  box-shadow: inset 0 -2px 0 #e9e9e9;
}

.burger {
  margin-left: 18px;
}

.file-menu {
  margin-left: 9px;
}

.file-chevron {
  margin-left: 7px;
}

.menu-sep {
  width: 1px;
  height: 28px;
  margin: 0 0 0 11px;
  background: #bbb;
}

.quick-tools {
  display: flex;
  align-items: center;
  gap: 12px;
  margin-left: 12px;
  width: 210px;
}

.quick-tools svg {
  fill: none;
  stroke: #555;
  stroke-width: 1.300;
}

.quick-tools svg.dim {
  stroke: #c4c4c4;
}

.pill {
  width: 54px;
  height: 26px;
  line-height: 26px;
  margin-left: 8px;
  text-align: center;
  border-radius: 13px;
  color: #fff;
  font-weight: 700;
  background: #e37d4f;
}

.menu-items {
  display: flex;
  gap: 31px;
  margin-left: 19px;
}

.menu-find {
  display: flex;
  align-items: center;
  gap: 2px;
  margin-left: 33px;
}

.menu-right {
  margin-left: auto;
  display: flex;
  align-items: center;
  padding-right: 18px;
}

.mr-item {
  display: flex;
  align-items: center;
  gap: 1px;
  margin-right: 13px;
}

.mr-sep {
  width: 1px;
  height: 28px;
  background: #ddd;
  margin-right: 8px;
}

.help-circle {
  width: 18px;
  height: 18px;
  margin-right: 20px;
  line-height: 16px;
  text-align: center;
  border: 1px solid #444;
  border-radius: 50%;
  box-sizing: border-box;
  font-size: 12px;
}

.menu-right > svg:last-child {
  margin-left: 20px;
}

/* ribbon */
.ribbon {
  height: 80px;
  display: flex;
  box-sizing: border-box;
  background: #f5f5f5;
  flex-shrink: 0;
  border-bottom: 2px solid #e0e0e0;
}

.rgroup {
  position: relative;
  display: flex;
  box-sizing: border-box;
  height: 72px;
  padding-top: 2px;
  margin-top: 4px;
  border-right: 1px solid #dedede;
}

.corner {
  position: absolute;
  right: 7px;
  bottom: 2px;
  width: 4px;
  height: 4px;
  border-right: 1px solid #999;
  border-bottom: 1px solid #999;
}

.big {
  display: flex;
  flex-direction: column;
  align-items: center;
  flex-shrink: 0;
}

.big svg {
  height: 38px;
}

.lbl {
  margin-top: -1px;
  line-height: 22px;
  font-size: 15px;
  white-space: nowrap;
}

.stack {
  display: flex;
  flex-direction: column;
  flex-shrink: 0;
}

.row {
  height: 32px;
  display: flex;
  align-items: center;
  gap: 3px;
  font-size: 15px;
  white-space: nowrap;
}

.off {
  color: #b8b8b8;
}

.abac {
  width: 20px;
  color: #8a6a30;
  font: 9px/10px 'Liberation Mono', monospace;
}

.font-group {
  display: block;
}

.font-top {
  display: flex;
  align-items: center;
  padding: 2px 0 0 6px;
}

.font-box {
  width: 195px;
  height: 27px;
  box-sizing: border-box;
  display: flex;
  border: 1px solid #c4c4c4;
  border-radius: 4px;
  background: #eee;
}

.fb-name {
  width: 119px;
  border-right: 1px solid #bbb;
  display: flex;
  align-items: center;
  justify-content: flex-end;
  padding-right: 4px;
  box-sizing: border-box;
}

.fb-size {
  flex: 1;
  display: flex;
  align-items: center;
  justify-content: space-between;
  padding: 0 4px;
  font-family: 'Liberation Sans', sans-serif;
}

.fb-name .caret,
.fb-size .caret {
  border-top-color: #bbb;
}

.grow-a {
  margin-left: 8px;
  color: #bbb;
  font: 22px/24px 'Liberation Sans', sans-serif;
}

.small-a {
  margin-left: 10px;
  font-size: 20px;
}

.grow-a sup {
  font-size: 10px;
  vertical-align: 8px;
  line-height: 0;
}

.font-bottom {
  display: flex;
  align-items: center;
  height: 30px;
  margin-top: 3px;
  padding-left: 4px;
  color: #b4b4b4;
  font: 20px/24px 'Liberation Sans', sans-serif;
}

.font-bottom > * {
  width: 29.500px;
  flex-shrink: 0;
  text-align: center;
}

.font-bottom > .under-a {
  width: 38px;
  text-align: left;
  padding-left: 7px;
  box-sizing: border-box;
}

.under-a span {
  text-decoration: underline;
  text-underline-offset: 3px;
  text-decoration-thickness: 2px;
}

.xsup sup,
.xsup sub {
  font-size: 9px;
  line-height: 0;
}

.eraser {
  display: flex;
  justify-content: center;
}

.dark-a {
  color: #444;
}

.para-group {
  display: block;
  padding: 2px 0 0 11px;
}

.para-row {
  display: flex;
  align-items: center;
  gap: 9.500px;
  height: 32px;
}

.para-row.top {
  gap: 12px;
}

/* workspace */
.work {
  flex: 1;
  min-height: 0;
  display: flex;
}

.slides-panel {
  width: 276px;
  flex-shrink: 0;
  display: flex;
  flex-direction: column;
  background: #d8d8d8;
  border-right: 1px solid #cdcdcd;
  box-sizing: border-box;
}

.sp-head {
  height: 46px;
  display: flex;
  align-items: center;
  box-sizing: border-box;
  padding: 6px 0 0 8px;
  flex-shrink: 0;
}

.sp-back {
  margin-right: 59px;
  margin-top: -6px;
}

.sp-tab {
  width: 70px;
  height: 25px;
  line-height: 25px;
  text-align: center;
  border-radius: 13px;
}

.sp-tab:first-of-type {
  width: 40px;
  margin-right: 10px;
}

.sp-tab.on {
  background: #999;
  color: #fff;
}

.sp-body {
  flex: 1;
  min-height: 0;
  display: flex;
  margin: 0 3px 0 8px;
  overflow: hidden;
}

.sp-list {
  width: 252px;
  flex-shrink: 0;
  background: #e6e6e6;
  padding-left: 32px;
  box-sizing: border-box;
  overflow: hidden;
}

.thumb-clip {
  width: 212px;
  height: 18px;
  box-sizing: border-box;
  border: 1px solid #c0c0c0;
  border-top: 0;
  border-radius: 0 0 3px 3px;
  padding: 0 3px 3px;
  margin-bottom: 21px;
  overflow: hidden;
}

.clip-inner {
  height: 15px;
  overflow: hidden;
  background: #dfdfdf;
}

.thumb-row {
  position: relative;
  margin-bottom: 21.400px;
}

.thumb-row.current {
  margin-top: -2px;
}

.th-num {
  position: absolute;
  right: 100%;
  margin-right: 4px;
  top: 8px;
  font: 16px/20px 'DejaVu Serif', serif;
  color: #555;
}

.current .th-num {
  color: #f07040;
}

.thumb {
  width: 212px;
  height: 121px;
  box-sizing: border-box;
  padding: 3px;
  border: 1px solid #c0c0c0;
  border-radius: 2px;
  background: #e8e8e8;
}

.current .thumb {
  margin: 0 -2px;
  width: 216px;
  height: 125px;
  padding: 4px;
  border: 3px solid #ef7346;
  border-radius: 5px;
}

.thumb-inner {
  position: relative;
  width: 204px;
  height: 114px;
  background: linear-gradient(#fff, #f5f5f5 55%, #dcdcdc);
  overflow: hidden;
}

.clip-inner {
  height: 15px;
}

.th-shape {
  position: absolute;
  box-sizing: border-box;
  border: 1px solid;
}

.th-arrow {
  position: absolute;
  left: 0;
  top: 0;
}

.th-label {
  position: absolute;
  white-space: nowrap;
  line-height: 1;
}

.tiny {
  font-size: 5px;
}

.white {
  color: #fff;
}

.gray {
  color: #666;
}

.th-title {
  font-size: 13px;
  color: #111;
}

.th-bold {
  font-size: 6px;
  font-weight: 700;
  color: #111;
}

.sp-scroll {
  flex: 1;
  background: #f5f5f5;
  position: relative;
}

.sp-thumb {
  position: absolute;
  left: 0;
  top: 423px;
  width: 10px;
  height: 315px;
  border-radius: 5px;
  background: #b0b0b0;
}

.sp-add {
  height: 40px;
  display: flex;
  align-items: center;
  padding-left: 127px;
  flex-shrink: 0;
  background: #e6e6e6;
}

.center {
  width: 1246px;
  flex-shrink: 0;
  display: flex;
  flex-direction: column;
}

.canvas {
  height: 790px;
  overflow: hidden;
  box-sizing: border-box;
  padding: 57px 0 0 22px;
  background: #e6e6e6;
}

.slide {
  position: relative;
  width: 1202px;
  height: 677px;
  background: linear-gradient(#fff 0, #fbfbfb 35%, #f0f0f0 65%, #d8d8d8 100%);
  box-shadow: -2px 0 4px rgba(0, 0, 0, 0.2), 3px 3px 5px rgba(0, 0, 0, 0.25);
}

.slide-title {
  position: absolute;
  left: 75px;
  top: 49px;
  margin: 0;
  font-size: 37.500px;
  line-height: 46px;
  font-weight: 700;
  color: #111;
}

.shape {
  position: absolute;
  box-sizing: border-box;
  border: 1px solid;
}

.shape.blue {
  background: #6498d2;
  border-color: #41719c;
}

.shape.yellow {
  background: #fcc010;
  border-color: #bc8c00;
  color: #111;
  font: 23px/1 'Liberation Sans', sans-serif;
  padding: 45px 0 0 31px;
}

.shape.orange {
  background: #e97d35;
  border-color: #ae5a21;
  color: #111;
  font-size: 36px;
  line-height: 45px;
  padding-top: 32px;
  word-break: break-all;
  font-family: 'Noto Sans CJK SC', sans-serif;
}

.slide-text {
  position: absolute;
  font-size: 23px;
  line-height: 30px;
  color: #111;
}

.slide-text:first-of-type {
  font-family: 'Liberation Sans', sans-serif;
}

.cursor {
  position: absolute;
  left: 724px;
  top: 524px;
}

.notes {
  height: 35px;
  box-sizing: border-box;
  display: flex;
  align-items: center;
  gap: 7px;
  padding-left: 8px;
  font-size: 15px;
  color: #444;
  border-top: 1px solid #ccc;
  background: #e6e6e6;
}

.v-scroll {
  width: 18px;
  flex-shrink: 0;
  position: relative;
  background: #d0d0d0;
}

.up-arrow {
  position: absolute;
  left: 5px;
  top: 15px;
  border-left: 4px solid transparent;
  border-right: 4px solid transparent;
  border-bottom: 5px solid #777;
}

.v-thumb {
  position: absolute;
  left: 1px;
  top: 652px;
  width: 16px;
  height: 40px;
  border: 1px solid #aaa;
  border-radius: 8px;
  box-sizing: border-box;
  background: #f8f8f8;
}

.pane {
  width: 325px;
  flex-shrink: 0;
  box-sizing: border-box;
  padding: 0 13px 0 12px;
  background: #e2e2e2;
  overflow: hidden;
}

.pane-head {
  height: 37px;
  display: flex;
  align-items: center;
  justify-content: space-between;
  font-size: 14px;
  margin-left: -2px;
  margin-right: -3px;
}

.pane-link {
  height: 22px;
  margin-top: 7px;
  display: flex;
  align-items: center;
  gap: 6px;
  font-size: 15px;
  color: #555;
}

.pane-orange {
  margin: 15px 0 0;
  font-size: 16.500px;
  line-height: 24px;
  font-weight: 400;
  color: #e8703a;
}

.pane-btns {
  display: flex;
  gap: 9px;
  margin-top: 7px;
}

.pbtn {
  height: 26px;
  display: flex;
  align-items: center;
  justify-content: center;
  gap: 3px;
  border-radius: 2px;
  background: #fafafa;
  color: #b5b5b5;
  font-size: 14.500px;
  white-space: nowrap;
}

.pane-sub {
  margin-top: 22px;
  line-height: 22px;
  font-size: 15.500px;
  color: #aaa;
}

.pane-field {
  display: flex;
  align-items: center;
  height: 24px;
  margin-bottom: 9px;
}

.pane-sub + .pane-field {
  margin-top: 6px;
}

.pane-field label {
  width: 40px;
  font-size: 14px;
  color: #aaa;
}

.pane-select {
  flex: 1;
  height: 24px;
  box-sizing: border-box;
  display: flex;
  align-items: center;
  justify-content: flex-end;
  padding-right: 6px;
  border-radius: 5px;
  background: #fafafa;
  border: 1px solid #e6e6e6;
}

.pane-text {
  height: 392px;
  box-sizing: border-box;
  padding: 5px 11px 5px 11px;
  border: 1px solid #d5d5d5;
  border-radius: 2px;
  background: #fff;
  font-size: 15px;
  line-height: 20px;
  color: #444;
}

.side {
  flex: 1;
  display: flex;
  flex-direction: column;
  align-items: center;
  padding-top: 14px;
  background: #d8d8d8;
}

.side-grip {
  width: 20px;
  height: 5px;
  margin-bottom: 14px;
  border-top: 1px solid #aaa;
  border-bottom: 1px solid #aaa;
}

.side-btn {
  width: 41px;
  height: 41px;
  margin-bottom: 4px;
  display: flex;
  align-items: center;
  justify-content: center;
  border-radius: 5px;
}

.side-btn.on {
  background: #a8a8a8;
}

.side-help {
  width: 19px;
  height: 19px;
  line-height: 17px;
  text-align: center;
  border: 1px solid #444;
  border-radius: 50%;
  box-sizing: border-box;
}

.side-line {
  width: 49px;
  height: 1px;
  margin-top: 6px;
  background: #c2c2c2;
}

.side-more {
  display: flex;
  gap: 3px;
  margin-top: 28px;
}

.side-more i {
  width: 4px;
  height: 4px;
  border: 1px solid #999;
  border-radius: 50%;
}

/* status */
.status {
  height: 40px;
  flex-shrink: 0;
  display: flex;
  align-items: center;
  position: relative;
  border-top: 1px solid #ccc;
  box-sizing: border-box;
  background: #e6e6e6;
  color: #666;
  font-size: 15px;
  padding-left: 12px;
}

.st-cell {
  display: flex;
  align-items: center;
  gap: 4px;
}

.st-smart {
  margin-left: 476px;
  display: flex;
  align-items: center;
  gap: 5px;
}

.st-views {
  position: absolute;
  left: 1335px;
  top: 0;
  height: 39px;
  display: flex;
  align-items: center;
  gap: 5px;
}

.view {
  width: 29px;
  height: 30px;
  display: flex;
  align-items: center;
  justify-content: center;
  border-radius: 4px;
  background: #bdbdbd;
  margin-right: 3px;
}

.st-views > svg:last-child {
  margin-left: 7px;
}

/* taskbar */
.taskbar {
  height: 50px;
  flex-shrink: 0;
  display: flex;
  position: relative;
  background: #1b2a30;
}

.tb-left {
  display: flex;
}

.tb-item {
  width: 62px;
  height: 50px;
  display: flex;
  align-items: center;
  justify-content: center;
  box-sizing: border-box;
  position: relative;
}

.tb-item:nth-child(3) {
  margin-left: 6px;
}

.tb-item svg {
  width: 34px;
  height: 34px;
}

.tb-item.run::after {
  content: '';
  position: absolute;
  left: 6px;
  right: 6px;
  bottom: 0;
  height: 3px;
  background: #aef0fa;
}

.tb-item.alert {
  background: #9c6330;
}

.tb-item.alert::after {
  content: '';
  position: absolute;
  left: 0;
  right: 0;
  bottom: 0;
  height: 3px;
  background: #f57a10;
}

.tb-item.active {
  background: #465358;
}

.tb-item.active::after {
  content: '';
  position: absolute;
  left: 0;
  right: 0;
  bottom: 0;
  height: 3px;
  background: #aef0fa;
}

.tray-icons {
  position: absolute;
  left: 0;
  top: 13px;
  width: 100%;
  height: 24px;
}

.tray-icons svg {
  position: absolute;
  top: 0;
}

.watermark {
  position: absolute;
  left: 1772px;
  top: 22px;
  font: 18.500px/24px 'Liberation Sans', sans-serif;
  color: rgba(200, 200, 200, 0.75);
  letter-spacing: 0.200px;
}

/* popup */
.ding {
  position: absolute;
  left: 1472px;
  top: 844px;
  width: 439px;
  height: 186px;
  box-sizing: border-box;
  padding: 13px 0 0 21px;
  background: #fff;
  border: 1px solid #e8e8e8;
  color: #222;
}

.ding-title {
  display: flex;
  align-items: center;
  gap: 9px;
  height: 28px;
  font-size: 19.500px;
  font-weight: 700;
  color: #4a94ff;
  margin-left: 1px;
}

.ding-line {
  margin-top: 6px;
  font-size: 19.300px;
  line-height: 25px;
  font-weight: 700;
  white-space: nowrap;
}

.ding-line.second {
  margin-top: 0;
  padding-left: 18px;
}

.ding-group {
  display: flex;
  align-items: center;
  gap: 7px;
  margin-top: 4px;
  height: 24px;
  font-size: 16px;
}

.ding-actions {
  display: flex;
  align-items: center;
  justify-content: flex-end;
  gap: 21px;
  margin-top: 13px;
  padding-right: 9px;
}

.ding-fast {
  display: flex;
  align-items: center;
  gap: 9px;
  font-size: 17.500px;
  color: #6ea4f5;
}

.ding-view {
  width: 113px;
  height: 32px;
  line-height: 32px;
  text-align: center;
  border-radius: 8px;
  background: #3d8bff;
  color: #fff;
  font-size: 17.500px;
}
</style>
